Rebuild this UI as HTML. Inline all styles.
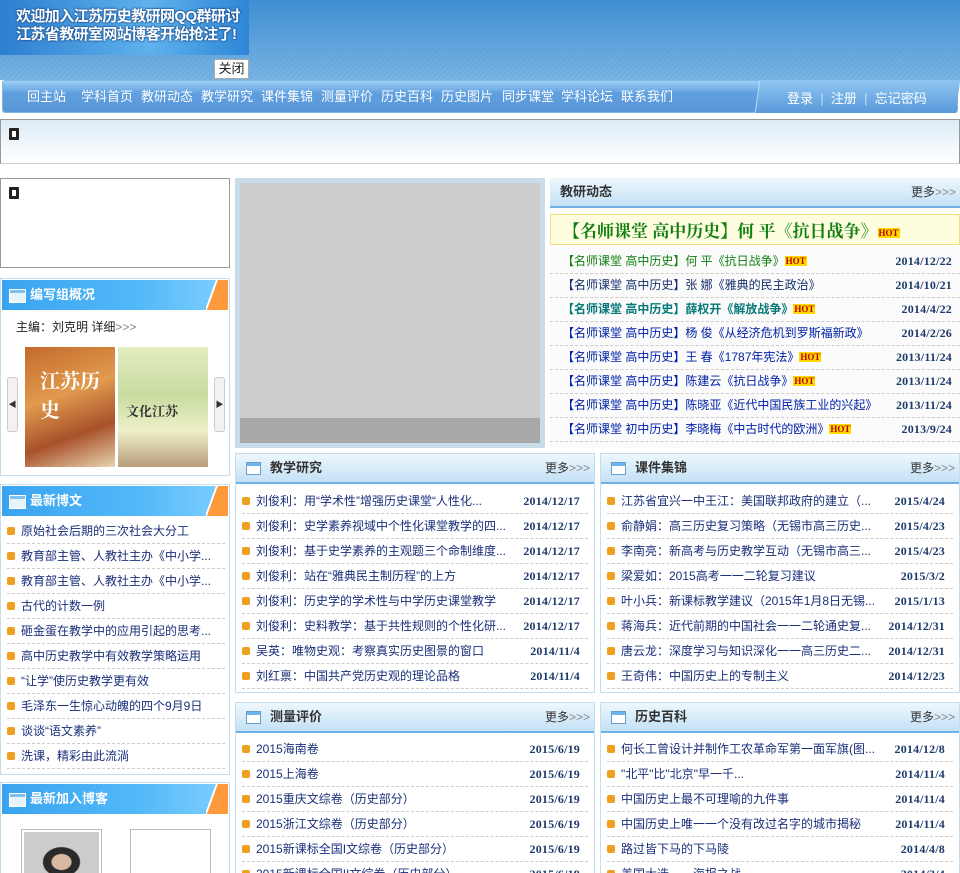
<!DOCTYPE html>
<html style="overflow:hidden;height:873px"><head><meta charset="utf-8">
<style>
*{margin:0;padding:0;box-sizing:border-box}
body{width:960px;height:873px;overflow:hidden;position:relative;background:#fff;font:12px "Liberation Sans","Noto Sans CJK SC",sans-serif;color:#333}
.abs{position:absolute}
#hdr{left:0;top:0;width:960px;height:80px;background:repeating-linear-gradient(135deg,#5b9fd8 0 2px,#6aaee2 2px 4px);}
#hdr:after{content:"";position:absolute;left:0;top:0;right:0;bottom:0;background:linear-gradient(#3f8fd2,rgba(140,190,230,.5))}
#banner{left:0;top:0;width:249px;height:55px;background:linear-gradient(90deg,#2d7fd0,#5fb2ec 60%,#2e86d6);z-index:2;color:#fff;font-size:15px;font-weight:bold;line-height:18px;padding:8px 0 0 16px;text-shadow:0 0 2px #1a4f90,0 0 2px #1a4f90,0 0 1px #1a4f90;letter-spacing:-0.6px}
#close{left:214px;top:59px;width:35px;height:20px;background:#fff;border:1px solid #aaa;z-index:2;font-size:13px;text-align:center;line-height:18px;color:#222}
#nav{left:2px;top:80px;width:956px;height:33px;background:linear-gradient(#9ed0f5,#5f9fdf 40%,#5a96d8);border:1px solid #7fb6e6;border-radius:3px;z-index:2;color:#fff;font-size:13px}
#nav span{position:absolute;top:5px}
#login{left:757px;top:80px;width:201px;height:33px;background:linear-gradient(#8fc6f0,#5a98da);border-left:1px solid #b6dcf7;transform:skewX(-8deg);z-index:3}
#lg{left:787px;top:88px;color:#fff;font-size:13px;z-index:4}
#bar{left:0;top:119px;width:960px;height:45px;border:1px solid #999;border-bottom-color:#ccc;background:linear-gradient(#dcebf6,#fff)}
.ico{position:absolute;width:10px;height:12px;background:#fff;border:3px solid #222;border-radius:1px}
.box{position:absolute;border:1px solid #c4def0;background:#fff}
.lh{position:absolute;left:1px;right:1px;top:1px;height:30px;background:linear-gradient(90deg,#3aa4f0,#52b8f8 60%,#7fd0ff);color:#fff;font-weight:bold;font-size:13px;line-height:30px;padding-left:28px}
.lh:before{content:"";position:absolute;left:7px;top:9px;width:15px;height:12px;border:1px solid #fff;background:linear-gradient(#7fc0ef 0 3px,#e8f4fc 3px)}
.lh:after{content:"";position:absolute;right:0;top:0;width:22px;height:30px;background:linear-gradient(110deg,transparent 30%,#fff 30% 36%,#ff9a3c 36%)}
.ph{position:absolute;left:0;right:0;top:0;height:30px;background:linear-gradient(#eef7fd,#c3e1f5);border-bottom:2px solid #6fb0e6;font-weight:bold;font-size:13px;line-height:28px;padding-left:34px;color:#333}
.ph i{position:absolute;left:10px;top:8px;width:15px;height:13px;border:1px solid #6a9fc9;background:linear-gradient(#6db5ec 0 3px,#fff 3px)}
.ph b{position:absolute;right:4px;top:0;font-weight:normal;font-size:12px;color:#333}
.ph b em{font-style:normal;color:#888}
ul{list-style:none;position:absolute}
li{height:25px;line-height:24px;border-bottom:1px dashed #ccc;position:relative;padding-left:14px;color:#1a2f7a;white-space:nowrap;overflow:hidden}
li:before{content:"";position:absolute;left:0;top:8px;width:8px;height:8px;background:#f0a020;border-radius:2px}
li s{text-decoration:none;position:absolute;right:8px;top:0;color:#1d3a6b;font-family:"Liberation Serif",serif;font-size:12px;font-weight:bold;letter-spacing:0.2px}
.jy li{height:24px;line-height:23px;padding-left:12px}
.jy li:before{display:none}
.hot{display:inline-block;background:#ffd800;color:#b00;font:bold 9px "Liberation Serif",serif;padding:0 1px;line-height:10px;vertical-align:1px}
.g{color:#108010}.b{color:#0020a8}.t{color:#087878;font-weight:bold}.n{color:#16306c}
</style></head><body>
<div id="hdr" class="abs"></div>
<div id="banner" class="abs">欢迎加入江苏历史教研网QQ群研讨<br>江苏省教研室网站博客开始抢注了!</div>
<div id="close" class="abs">关闭</div>
<div id="nav" class="abs">
<span style="left:24px">回主站</span><span style="left:78px">学科首页</span><span style="left:138px">教研动态</span><span style="left:198px">教学研究</span><span style="left:258px">课件集锦</span><span style="left:318px">测量评价</span><span style="left:378px">历史百科</span><span style="left:438px">历史图片</span><span style="left:499px">同步课堂</span><span style="left:558px">学科论坛</span><span style="left:618px">联系我们</span>
</div>
<div id="login" class="abs"></div>
<div id="lg" class="abs">登录 <span style="color:#c8e0f5">&nbsp;|&nbsp;</span> 注册 <span style="color:#c8e0f5">&nbsp;|&nbsp;</span> 忘记密码</div>
<div id="bar" class="abs"><div class="ico" style="left:8px;top:8px"></div></div>

<div class="box" style="left:0;top:178px;width:230px;height:90px;border-color:#999"><div class="ico" style="left:8px;top:8px"></div></div>
<div class="box" style="left:0;top:278px;width:230px;height:198px">
<div class="lh">编写组概况</div>
<div class="abs" style="left:15px;top:39px;font-size:12px;color:#222">主编：刘克明 详细<span style="color:#888">&gt;&gt;&gt;</span></div>
<div class="abs" style="left:6px;top:98px;width:11px;height:55px;border:1px solid #ccc;border-radius:3px;background:#f2f2f2;font-size:8px;line-height:53px;text-align:center">◀</div>
<div class="abs" style="left:24px;top:68px;width:90px;height:120px;background:linear-gradient(160deg,#c46a2a,#e19a4e 40%,#a8512a 70%,#e8d4b0);color:#fff;font:bold 20px 'Noto Serif CJK SC',serif;padding:18px 0 0 15px">江苏历史</div>
<div class="abs" style="left:117px;top:68px;width:90px;height:120px;background:linear-gradient(#e3ecc0,#c8dca0 40%,#eef0c8 70%,#b89c7c);color:#333;font:bold 13px 'Noto Serif CJK SC',serif;padding:54px 0 0 8px">文化江苏</div>
<div class="abs" style="left:213px;top:98px;width:11px;height:55px;border:1px solid #ccc;border-radius:3px;background:#f2f2f2;font-size:8px;line-height:53px;text-align:center">▶</div>
</div>
<div class="box" style="left:0;top:484px;width:230px;height:291px">
<div class="lh">最新博文</div>
<ul style="left:6px;top:34px;width:218px">
<li>原始社会后期的三次社会大分工</li><li>教育部主管、人教社主办《中小学...</li><li>教育部主管、人教社主办《中小学...</li><li>古代的计数一例</li><li>砸金蛋在教学中的应用引起的思考...</li><li>高中历史教学中有效教学策略运用</li><li>“让学”使历史教学更有效</li><li>毛泽东一生惊心动魄的四个9月9日</li><li>谈谈“语文素养”</li><li>洗课，精彩由此流淌</li>
</ul></div>
<div class="box" style="left:0;top:782px;width:230px;height:100px">
<div class="lh">最新加入博客</div>
<div class="abs" style="left:20px;top:46px;width:81px;height:60px;border:1px solid #bbb;padding:2px"><div style="width:75px;height:60px;background:radial-gradient(ellipse at 50% 50%,#d8b8a0 0 18%,#2a2a2a 20% 34%,#ccc 36%)"></div></div>
<div class="abs" style="left:129px;top:46px;width:81px;height:60px;border:1px solid #bbb"></div>
</div>

<div class="abs" style="left:235px;top:178px;width:310px;height:270px;background:#c8dcea"></div>
<div class="abs" style="left:240px;top:183px;width:300px;height:260px;background:#cdcdcd"></div>
<div class="abs" style="left:240px;top:418px;width:300px;height:25px;background:#a8a8a8"></div>

<div class="box" style="left:550px;top:178px;width:410px;height:270px;border:none;background:#fbfbfb">
<div class="ph" style="padding-left:10px">教研动态<b>更多<em>&gt;&gt;&gt;</em></b></div>
<div class="abs" style="left:0;top:36px;width:410px;height:31px;background:#fffde0;border:1px solid #f0e080;color:#108010;font-size:17px;font-weight:bold;line-height:29px;padding-left:12px;font-family:'Noto Serif CJK SC','Liberation Serif',serif">【名师课堂 高中历史】何 平《抗日战争》<span class="hot">HOT</span></div>
<ul class="jy" style="left:0;top:72px;width:410px">
<li class="g">【名师课堂 高中历史】何 平《抗日战争》<span class="hot">HOT</span><s>2014/12/22</s></li>
<li class="n">【名师课堂 高中历史】张 娜《雅典的民主政治》<s>2014/10/21</s></li>
<li class="t">【名师课堂 高中历史】薛权开《解放战争》<span class="hot">HOT</span><s>2014/4/22</s></li>
<li class="b">【名师课堂 高中历史】杨 俊《从经济危机到罗斯福新政》<s>2014/2/26</s></li>
<li class="b">【名师课堂 高中历史】王 春《1787年宪法》<span class="hot">HOT</span><s>2013/11/24</s></li>
<li class="b">【名师课堂 高中历史】陈建云《抗日战争》<span class="hot">HOT</span><s>2013/11/24</s></li>
<li class="b">【名师课堂 高中历史】陈晓亚《近代中国民族工业的兴起》<s>2013/11/24</s></li>
<li class="b">【名师课堂 初中历史】李晓梅《中古时代的欧洲》<span class="hot">HOT</span><s>2013/9/24</s></li>
</ul></div>

<div class="box" style="left:235px;top:453px;width:360px;height:240px">
<div class="ph"><i></i>教学研究<b>更多<em>&gt;&gt;&gt;</em></b></div>
<ul style="left:6px;top:35px;width:346px">
<li>刘俊利：用“学术性”增强历史课堂“人性化...<s>2014/12/17</s></li>
<li>刘俊利：史学素养视域中个性化课堂教学的四...<s>2014/12/17</s></li>
<li>刘俊利：基于史学素养的主观题三个命制维度...<s>2014/12/17</s></li>
<li>刘俊利：站在“雅典民主制历程”的上方<s>2014/12/17</s></li>
<li>刘俊利：历史学的学术性与中学历史课堂教学<s>2014/12/17</s></li>
<li>刘俊利：史料教学：基于共性规则的个性化研...<s>2014/12/17</s></li>
<li>吴英：唯物史观：考察真实历史图景的窗口<s>2014/11/4</s></li>
<li>刘红禀：中国共产党历史观的理论品格<s>2014/11/4</s></li>
</ul></div>
<div class="box" style="left:600px;top:453px;width:360px;height:240px">
<div class="ph"><i></i>课件集锦<b>更多<em>&gt;&gt;&gt;</em></b></div>
<ul style="left:6px;top:35px;width:346px">
<li>江苏省宜兴一中王江：美国联邦政府的建立（...<s>2015/4/24</s></li>
<li>俞静娟：高三历史复习策略（无锡市高三历史...<s>2015/4/23</s></li>
<li>李南亮：新高考与历史教学互动（无锡市高三...<s>2015/4/23</s></li>
<li>梁爱如：2015高考一一二轮复习建议<s>2015/3/2</s></li>
<li>叶小兵：新课标教学建议（2015年1月8日无锡...<s>2015/1/13</s></li>
<li>蒋海兵：近代前期的中国社会一一二轮通史复...<s>2014/12/31</s></li>
<li>唐云龙：深度学习与知识深化一一高三历史二...<s>2014/12/31</s></li>
<li>王奇伟：中国历史上的专制主义<s>2014/12/23</s></li>
</ul></div>

<div class="box" style="left:235px;top:702px;width:360px;height:180px">
<div class="ph"><i></i>测量评价<b>更多<em>&gt;&gt;&gt;</em></b></div>
<ul style="left:6px;top:34px;width:346px">
<li>2015海南卷<s>2015/6/19</s></li>
<li>2015上海卷<s>2015/6/19</s></li>
<li>2015重庆文综卷（历史部分）<s>2015/6/19</s></li>
<li>2015浙江文综卷（历史部分）<s>2015/6/19</s></li>
<li>2015新课标全国I文综卷（历史部分）<s>2015/6/19</s></li>
<li>2015新课标全国II文综卷（历史部分）<s>2015/6/19</s></li>
</ul></div>
<div class="box" style="left:600px;top:702px;width:360px;height:180px">
<div class="ph"><i></i>历史百科<b>更多<em>&gt;&gt;&gt;</em></b></div>
<ul style="left:6px;top:34px;width:346px">
<li>何长工曾设计并制作工农革命军第一面军旗(图...<s>2014/12/8</s></li>
<li>"北平"比"北京"早一千...<s>2014/11/4</s></li>
<li>中国历史上最不可理喻的九件事<s>2014/11/4</s></li>
<li>中国历史上唯一一个没有改过名字的城市揭秘<s>2014/11/4</s></li>
<li>路过皆下马的下马陵<s>2014/4/8</s></li>
<li>美国大选一一海报之战<s>2014/3/4</s></li>
</ul></div>
</body></html>
